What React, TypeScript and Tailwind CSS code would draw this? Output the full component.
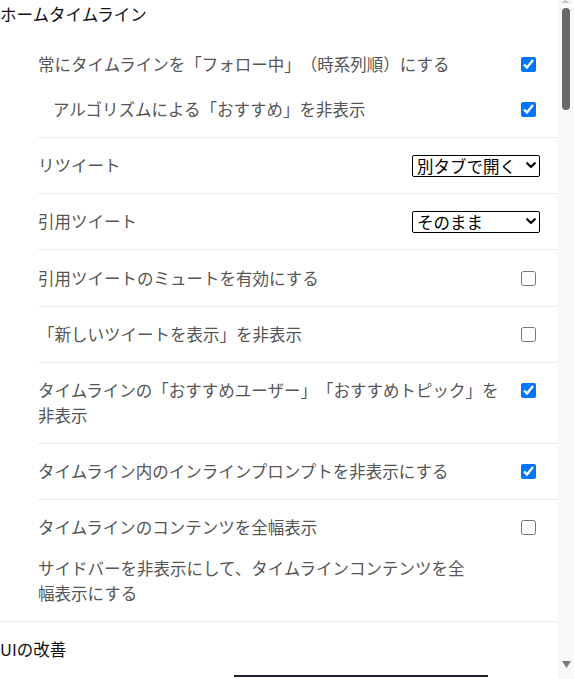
import React from 'react';

type Row =
  | { kind: 'check'; label: string; checked: boolean; desc?: string }
  | { kind: 'select'; label: string; value: string; options: string[] };

const rows: Row[] = [
  { kind: 'select', label: 'リツイート', value: '別タブで開く', options: ['別タブで開く', 'そのまま'] },
  { kind: 'select', label: '引用ツイート', value: 'そのまま', options: ['そのまま', '別タブで開く'] },
  { kind: 'check', label: '引用ツイートのミュートを有効にする', checked: false },
  { kind: 'check', label: '「新しいツイートを表示」を非表示', checked: false },
  { kind: 'check', label: 'タイムラインの「おすすめユーザー」「おすすめトピック」を非表示', checked: true },
  { kind: 'check', label: 'タイムライン内のインラインプロンプトを非表示にする', checked: true },
  {
    kind: 'check',
    label: 'タイムラインのコンテンツを全幅表示',
    checked: false,
    desc: 'サイドバーを非表示にして、タイムラインコンテンツを全幅表示にする',
  },
];

function Check({ checked }: { checked: boolean }) {
  return <input type="checkbox" defaultChecked={checked} className="w-[15px] h-[15px] m-0 mt-[5px] shrink-0" />;
}

function Select({ value, options }: { value: string; options: string[] }) {
  return (
    <div className="relative w-[128px] h-[22px] mt-[1px] shrink-0">
      <select
        defaultValue={value}
        className="appearance-none w-full h-full border border-black rounded-[2px] bg-white text-black text-[16.5px] leading-[18px] py-0 pl-[4px] pr-[18px]"
      >
        {options.map(o => (
          <option key={o}>{o}</option>
        ))}
      </select>
      <svg
        className="absolute right-[4px] top-[8px] pointer-events-none"
        width="10"
        height="7"
        viewBox="0 0 10 7"
      >
        <path d="M1.2 1.2 L5 5 L8.8 1.2" fill="none" stroke="#000" strokeWidth="2.2" strokeLinecap="round" strokeLinejoin="round" />
      </svg>
    </div>
  );
}

function Scrollbar() {
  return (
    <div className="w-[17px] h-full bg-[#f9f9f9] flex flex-col items-center shrink-0">
      <div className="h-[3px] w-[9px] flex justify-center">
        <svg width="9" height="3" viewBox="0 0 9 3">
          <path d="M0 3 L4.5 0 L9 3 Z" fill="#c4c4c4" />
        </svg>
      </div>
      <div className="mt-[5px] w-[8px] h-[102px] rounded-full bg-[#686868]" />
      <div className="flex-1" />
      <div className="mb-[11px] ml-[1px]">
        <svg width="9" height="7" viewBox="0 0 9 7">
          <path d="M0 0 H9 L4.5 7 Z" fill="#7b7b7b" />
        </svg>
      </div>
    </div>
  );
}

export default function App() {
  return (
    <div
      className="h-[679px] w-[574px] overflow-hidden flex bg-white text-[16.5px] leading-[25px] [text-spacing-trim:space-all]"
      style={{ fontFamily: '"Noto Sans CJK JP", "Noto Sans", sans-serif' }}
    >
      <div className="flex-1 min-w-0">
        <section className="border-b border-[#ebebeb]">
          <h2 className="pt-[2px] text-[#111]">ホームタイムライン</h2>
          <div className="ml-[38px] text-[#555]">
            <div className="border-b border-[#ebebeb] pt-[25px] pb-[15px] pr-[21px] flex flex-col gap-[20px]">
              <div className="flex items-start justify-between">
                <span>常にタイムラインを「フォロー中」（時系列順）にする</span>
                <Check checked />
              </div>
              <div className="flex items-start justify-between pl-[15px]">
                <span>アルゴリズムによる「おすすめ」を非表示</span>
                <Check checked />
              </div>
            </div>
            {rows.map((r, i) => (
              <div
                key={r.label}
                className={
                  'pt-[15.2px] pb-[15px] ' +
                  (i < rows.length - 1 ? 'border-b border-[#ebebeb] ' : '') +
                  (r.kind === 'select' ? 'pr-[17px]' : 'pr-[21px]')
                }
              >
                <div className="flex items-start justify-between">
                  <span className="max-w-[470px]">{r.label}</span>
                  {r.kind === 'select' ? <Select value={r.value} options={r.options} /> : <Check checked={r.checked} />}
                </div>
                {r.kind === 'check' && r.desc && <p className="mt-[16px] w-[435px]">{r.desc}</p>}
              </div>
            ))}
          </div>
        </section>
        <section>
          <h2 className="pt-[15px] text-[#111]">UIの改善</h2>
          <div className="mt-[13px] ml-[234px] w-[254px] h-[2px] bg-[#1b2130]" />
        </section>
      </div>
      <Scrollbar />
    </div>
  );
}
